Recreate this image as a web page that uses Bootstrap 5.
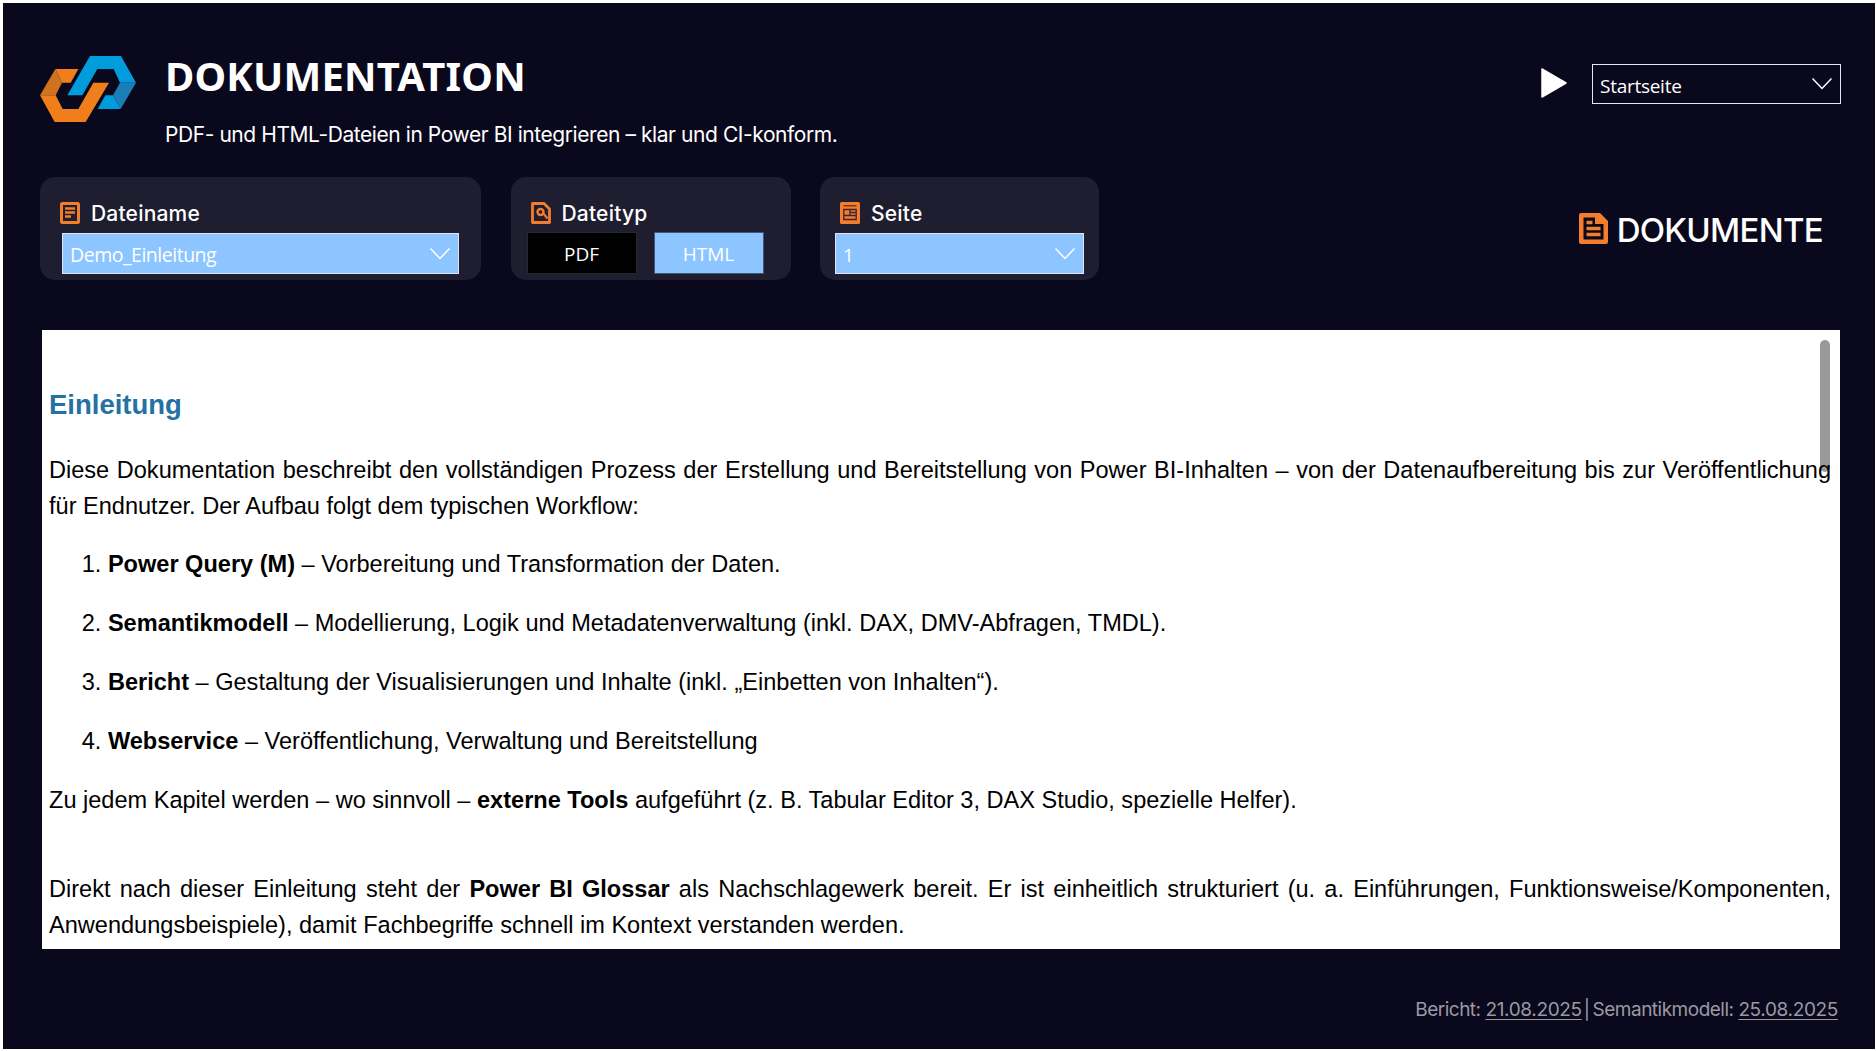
<!DOCTYPE html>
<html lang="de">
<head>
<meta charset="utf-8">
<title>Dokumentation</title>
<meta name="viewport" content="width=device-width, initial-scale=1">
<link href="https://cdn.jsdelivr.net/npm/bootstrap@5.3.0/dist/css/bootstrap.min.css" rel="stylesheet">
<style>
:root{--ink:#0a081d;--panel:#1f1d30;--sky:#8cc5ff;--orange:#f47d2b}
body{background:#fff;padding:3px 1px 2px 3px;height:100vh;overflow:hidden;font-family:Inter,sans-serif}
.report{background:var(--ink);height:1046px;padding:53px 34px 0 37px;white-space:nowrap}
.report svg{display:block;flex:none}
.top-bar{height:121px}
.brand-text{margin-left:29px}
.page-title{font:700 40px/54px "Noto Sans",sans-serif;letter-spacing:.2px;margin:-7px 0 0}
.page-sub{font-size:21px;line-height:28px;letter-spacing:-.43px;margin:18px 0 0}
.nav-tools{margin-top:8px}
.segoe{font-family:"Open Sans","Noto Sans",sans-serif;font-size:19px}
.picker{border:1px solid #dfe6f2;border-radius:0;color:#fff;background:var(--sky);height:41px;padding:1px 8px 0 7px;text-align:left;line-height:40px}
.picker-nav{background:transparent;border-color:#e8e8ec;width:249px;height:40px;letter-spacing:-.27px;line-height:39px;padding-top:2px;margin-left:25px}
.picker-file{width:397px;margin-left:22px;font-size:19.5px;letter-spacing:-.48px}
.picker-page{width:249px;margin-left:15px}
.filters{gap:29.5px}
.filter-card{background:var(--panel);border-radius:15px;height:103px;padding-top:25px}
.filter-label{font-size:21px;font-weight:500;line-height:24px;letter-spacing:.2px;padding-left:20px;gap:11px;height:31px}
.w-file{width:441px}.w-type{width:280px}.w-page{width:279px}
.type-btns{gap:17px;padding-left:16px;margin-top:-1px}
.type-btn{width:110px;height:42px;border:1px solid #222a2c;border-radius:0;color:#fff;padding:2px 0 0;line-height:39px}
.type-pdf{background:#000}.type-html{background:var(--sky);border-color:#3e5a78}
.section-name{font-size:33px;font-weight:500;line-height:42px;letter-spacing:-.7px;gap:9px;margin:32px 18px 0 0}
.doc-view{position:relative;background:#fff;color:#000;height:619px;margin:50px 1px 0 2px;padding:58px 9px 0 7px;overflow:hidden;white-space:normal;font:23.56px/36px "Liberation Sans",Arial,sans-serif}
.doc-view h2{font-size:27.5px;font-weight:700;line-height:33.4px;color:#2471a3;margin:0 0 30.6px}
.doc-view p,.doc-view li{margin:0 0 23px;text-align:justify}
.doc-view h2 + p{margin-bottom:22.2px}
.doc-view ol{padding-left:2.5em;margin:0}
.doc-view .after-gap{margin-top:53px}
.doc-scroll{position:absolute;top:10px;right:10px;width:10px;height:132px;border-radius:5px;background:rgba(0,0,0,.4)}
.stamp{color:#9b9aa3;font-size:19px;line-height:24px;letter-spacing:-.5px;margin:49px 3px 0 0}
.stamp u{letter-spacing:-.35px;text-underline-offset:3px;text-decoration-thickness:1px}
.stamp .bar{margin:0 3px 0 2px}
</style>
</head>
<body>
<main class="report text-white">
  <header class="top-bar d-flex justify-content-between align-items-start">
    <div class="d-flex align-items-start">
      <svg width="96" height="66" viewBox="60 78 288 198" aria-hidden="true">
        <path fill="#009cdc" d="M142 196 210 78h93l45 80h-48l-19-41h-49l-45 79z"/>
        <path fill="#1b7db8" d="M300 158h48l-46 79-23-41z"/>
        <path fill="#009cdc" d="M256 196h23l23 41h-69z"/>
        <path fill="#f07f1b" d="M106 117h69l-23 41h-26z"/>
        <path fill="#cf7320" d="m106 117 20 41-19 38H60z"/>
        <path fill="#f07f1b" d="M60 196h47l21 41h47l45-79h47l-70 118h-93z"/>
      </svg>
      <div class="brand-text">
        <h1 class="page-title">DOKUMENTATION</h1>
        <p class="page-sub">PDF- und HTML-Dateien in Power BI integrieren – klar und CI-konform.</p>
      </div>
    </div>
    <div class="nav-tools d-flex">
      <svg class="mt-1" width="26" height="30" viewBox="0 0 26 30" aria-label="Start"><path fill="#fff" stroke="#fff" stroke-width="1.5" stroke-linejoin="round" d="M1 1v28l24-14z"/></svg>
      <button class="picker picker-nav segoe d-flex justify-content-between" type="button">Startseite
        <svg class="mt-2" width="20" height="20" viewBox="0 0 20 20"><path d="M.5 3.500 10 13.500 19.500 3.500" fill="none" stroke="#fff" stroke-width="1.500"/></svg></button>
    </div>
  </header>

  <div class="d-flex justify-content-between">
    <div class="filters d-flex">
      <section class="filter-card w-file">
        <div class="filter-label d-flex">
          <svg width="20" height="22" viewBox="0 0 20 22"><rect x="1.500" y="1.500" width="17" height="19" rx="1" fill="none" stroke="#f47d2b" stroke-width="3"/><path d="M5 6.500h10M5 10.500h10M5 14.500h6" stroke="#f47d2b" stroke-width="2.500"/></svg>
          <span>Dateiname</span></div>
        <button class="picker picker-file segoe d-flex justify-content-between" type="button">Demo_Einleitung
          <svg class="mt-2" width="20" height="20" viewBox="0 0 20 20"><path d="M.5 5.500 10 15.500 19.500 5.500" fill="none" stroke="#fff" stroke-width="1.500"/></svg></button>
      </section>
      <section class="filter-card w-type">
        <div class="filter-label d-flex">
          <svg width="20" height="22" viewBox="0 0 20 22"><path d="M1.500 1.500H13L18.500 7v13.500h-17z" fill="none" stroke="#f47d2b" stroke-width="2.800" stroke-linejoin="round"/><circle cx="9.500" cy="10" r="3" fill="none" stroke="#f47d2b" stroke-width="2.400"/><path d="m12 11 4.500 5.500" stroke="#f47d2b" stroke-width="2"/></svg>
          <span>Dateityp</span></div>
        <div class="type-btns d-flex">
          <button class="type-btn type-pdf segoe" type="button">PDF</button>
          <button class="type-btn type-html segoe" type="button">HTML</button>
        </div>
      </section>
      <section class="filter-card w-page">
        <div class="filter-label d-flex">
          <svg width="20" height="22" viewBox="0 0 20 22"><rect width="20" height="22" rx="1.500" fill="#f47d2b"/><path d="M3.500 3.800h13" stroke="#5c2f30" stroke-width="1.300"/><path d="M3.800 7.500h12.400v10H3.800zM10 7.500V13M4 13.500h12M10.500 10.500H16" stroke="#3a2431" stroke-width="1.300" fill="none"/></svg>
          <span>Seite</span></div>
        <button class="picker picker-page segoe d-flex justify-content-between" type="button">1
          <svg class="mt-2" width="20" height="20" viewBox="0 0 20 20"><path d="M.5 5.500 10 15.500 19.500 5.500" fill="none" stroke="#fff" stroke-width="1.500"/></svg></button>
      </section>
    </div>
    <div class="section-name d-flex">
      <svg class="mt-1" width="29" height="31" viewBox="0 0 29 31"><path d="M2 0h19l8 8v21a2 2 0 0 1-2 2H2a2 2 0 0 1-2-2V2a2 2 0 0 1 2-2z" fill="#f47d2b"/><path d="M4.500 4.500H16V11h8.500v15.500h-20z" fill="#0a081d"/><path d="M7.500 9.500h6M7.500 15.500h14M7.500 21.500h14" stroke="#f47d2b" stroke-width="3.600"/></svg>
      <span>DOKUMENTE</span>
    </div>
  </div>

  <article class="doc-view">
    <h2>Einleitung</h2>
    <p>Diese Dokumentation beschreibt den vollständigen Prozess der Erstellung und Bereitstellung von Power BI-Inhalten – von der Datenaufbereitung bis zur Veröffentlichung für Endnutzer. Der Aufbau folgt dem typischen Workflow:</p>
    <ol>
      <li><b>Power Query (M)</b> – Vorbereitung und Transformation der Daten.</li>
      <li><b>Semantikmodell</b> – Modellierung, Logik und Metadatenverwaltung (inkl. DAX, DMV-Abfragen, TMDL).</li>
      <li><b>Bericht</b> – Gestaltung der Visualisierungen und Inhalte (inkl. „Einbetten von Inhalten“).</li>
      <li><b>Webservice</b> – Veröffentlichung, Verwaltung und Bereitstellung</li>
    </ol>
    <p>Zu jedem Kapitel werden – wo sinnvoll – <b>externe Tools</b> aufgeführt (z. B. Tabular Editor 3, DAX Studio, spezielle Helfer).</p>
    <p class="after-gap">Direkt nach dieser Einleitung steht der <b>Power BI Glossar</b> als Nachschlagewerk bereit. Er ist einheitlich strukturiert (u. a. Einführungen, Funktionsweise/Komponenten, Anwendungsbeispiele), damit Fachbegriffe schnell im Kontext verstanden werden.</p>
    <div class="doc-scroll"></div>
  </article>

  <footer class="stamp text-end">Bericht: <u>21.08.2025</u><span class="bar">|</span>Semantikmodell: <u>25.08.2025</u></footer>
</main>
<script src="https://cdn.jsdelivr.net/npm/bootstrap@5.3.0/dist/js/bootstrap.bundle.min.js"></script>
</body>
</html>
